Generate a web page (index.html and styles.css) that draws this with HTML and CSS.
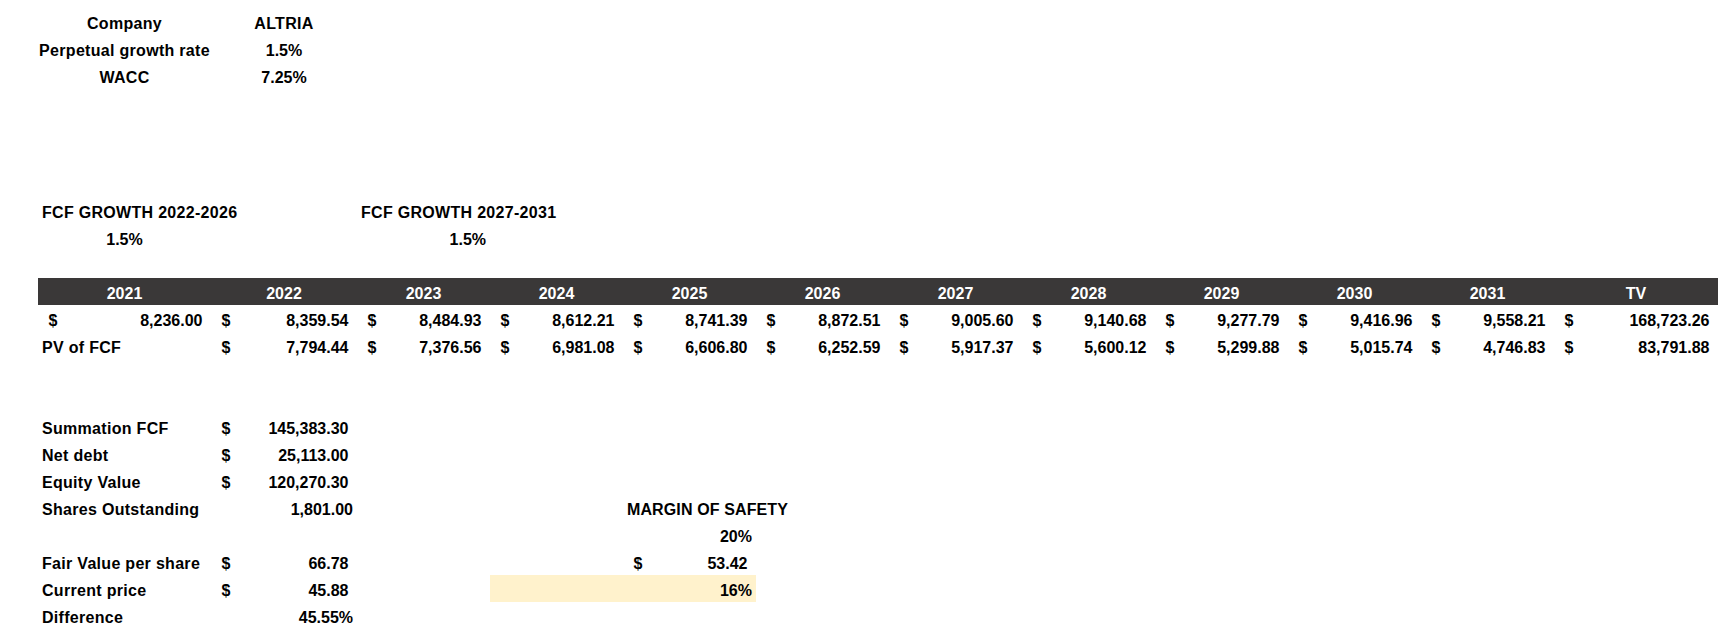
FILE: index.html
```html
<!DOCTYPE html>
<html lang="en">
<head>
<meta charset="utf-8">
<title>ALTRIA DCF</title>
<link rel="stylesheet" href="styles.css">
</head>
<body>
<div class="sheet">
  <section class="block">
    <div class="row"><div class="c txt">Company</div><div class="c txt">ALTRIA</div></div>
    <div class="row"><div class="c txt">Perpetual growth rate</div><div class="c">1.5%</div></div>
    <div class="row"><div class="c txt">WACC</div><div class="c">7.25%</div></div>
  </section>

  <div class="spacer spacer-4"></div>

  <section class="block">
    <div class="row"><div class="l txt">FCF GROWTH 2022-2026</div><div></div><div class="l txt">FCF GROWTH 2027-2031</div></div>
    <div class="row"><div class="c">1.5%</div><div></div><div class="r">1.5%</div></div>
  </section>

  <div class="spacer spacer-1"></div>

  <section class="block">
    <div class="row head">
      <div class="c">2021</div><div class="c">2022</div><div class="c">2023</div><div class="c">2024</div>
      <div class="c">2025</div><div class="c">2026</div><div class="c">2027</div><div class="c">2028</div>
      <div class="c">2029</div><div class="c">2030</div><div class="c">2031</div><div class="c">TV</div>
    </div>
    <div class="row">
      <div class="acct"><span>$</span><span>8,236.00</span></div>
      <div class="acct"><span>$</span><span>8,359.54</span></div>
      <div class="acct"><span>$</span><span>8,484.93</span></div>
      <div class="acct"><span>$</span><span>8,612.21</span></div>
      <div class="acct"><span>$</span><span>8,741.39</span></div>
      <div class="acct"><span>$</span><span>8,872.51</span></div>
      <div class="acct"><span>$</span><span>9,005.60</span></div>
      <div class="acct"><span>$</span><span>9,140.68</span></div>
      <div class="acct"><span>$</span><span>9,277.79</span></div>
      <div class="acct"><span>$</span><span>9,416.96</span></div>
      <div class="acct"><span>$</span><span>9,558.21</span></div>
      <div class="acct"><span>$</span><span>168,723.26</span></div>
    </div>
    <div class="row">
      <div class="l txt">PV of FCF</div>
      <div class="acct"><span>$</span><span>7,794.44</span></div>
      <div class="acct"><span>$</span><span>7,376.56</span></div>
      <div class="acct"><span>$</span><span>6,981.08</span></div>
      <div class="acct"><span>$</span><span>6,606.80</span></div>
      <div class="acct"><span>$</span><span>6,252.59</span></div>
      <div class="acct"><span>$</span><span>5,917.37</span></div>
      <div class="acct"><span>$</span><span>5,600.12</span></div>
      <div class="acct"><span>$</span><span>5,299.88</span></div>
      <div class="acct"><span>$</span><span>5,015.74</span></div>
      <div class="acct"><span>$</span><span>4,746.83</span></div>
      <div class="acct"><span>$</span><span>83,791.88</span></div>
    </div>
  </section>

  <div class="spacer spacer-2"></div>

  <section class="block">
    <div class="row"><div class="l txt">Summation FCF</div><div class="acct"><span>$</span><span>145,383.30</span></div></div>
    <div class="row"><div class="l txt">Net debt</div><div class="acct"><span>$</span><span>25,113.00</span></div></div>
    <div class="row"><div class="l txt">Equity Value</div><div class="acct"><span>$</span><span>120,270.30</span></div></div>
    <div class="row">
      <div class="l txt">Shares Outstanding</div><div class="r">1,801.00</div>
      <div></div><div></div><div class="l txt-s">MARGIN OF SAFETY</div>
    </div>
    <div class="row">
      <div></div><div></div><div></div><div></div><div class="r">20%</div>
    </div>
    <div class="row">
      <div class="l txt">Fair Value per share</div><div class="acct"><span>$</span><span>66.78</span></div>
      <div></div><div></div><div class="acct"><span>$</span><span>53.42</span></div>
    </div>
    <div class="row">
      <div class="l txt">Current price</div><div class="acct"><span>$</span><span>45.88</span></div>
      <div></div><div class="hl"></div><div class="r hl">16%</div>
    </div>
    <div class="row"><div class="l txt">Difference</div><div class="r">45.55%</div></div>
  </section>
</div>
</body>
</html>
```

FILE: styles.css
```css
html, body {
  margin: 0;
  padding: 0;
  background: #ffffff;
}

body {
  font-family: "Liberation Sans", Arial, sans-serif;
  font-weight: bold;
  font-size: 16px;
  color: #000000;
}

.sheet {
  padding: 8px 0 0 38px;
  width: 1680px;
}

.row {
  display: grid;
  grid-template-columns: 173px 146px repeat(9, 133px) 164px;
  height: 27px;
}

.row > div {
  box-sizing: border-box;
  height: 27px;
  padding-top: 5px;
  line-height: 22px;
  white-space: nowrap;
  overflow: visible;
}

.c {
  text-align: center;
}

.l {
  text-align: left;
  padding-left: 4px;
}

.r {
  text-align: right;
  padding-right: 4px;
}

.txt {
  letter-spacing: 0.3px;
}

.txt-s {
  letter-spacing: 0.12px;
}

.acct {
  display: flex;
  justify-content: space-between;
  padding-left: 10.5px;
  padding-right: 8.5px;
}

.head {
  background: #3a3838;
  color: #ffffff;
}

.hl {
  background: #fff2cc;
}

.spacer-1 { height: 27px; }
.spacer-2 { height: 54px; }
.spacer-4 { height: 108px; }
```
